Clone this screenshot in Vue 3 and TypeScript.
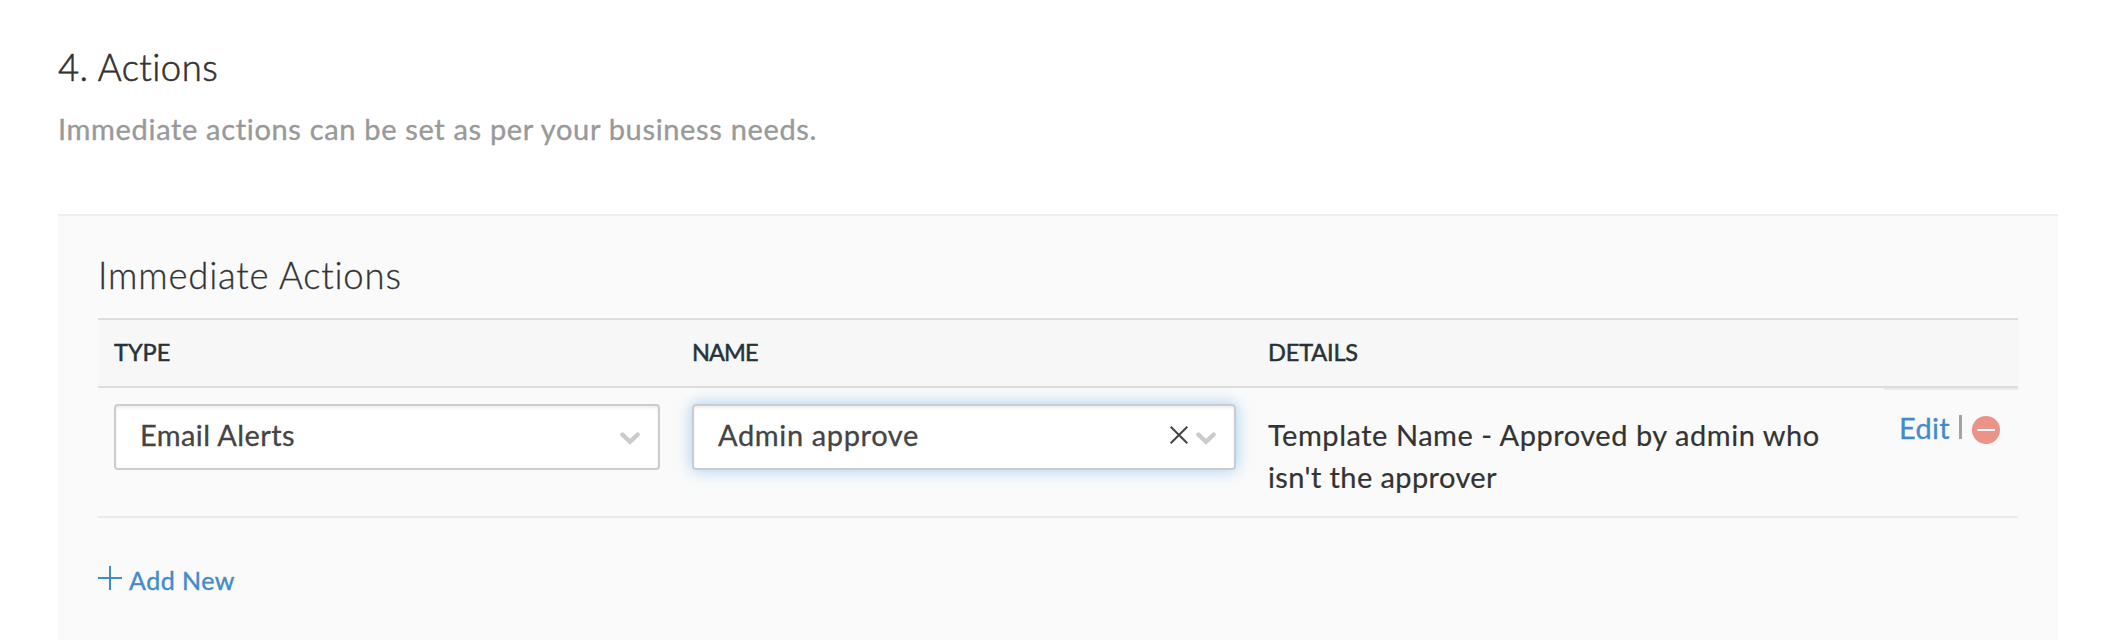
<script setup lang="ts">
interface Column {
  key: string
  label: string
}

const columns: Column[] = [
  { key: 'type', label: 'TYPE' },
  { key: 'name', label: 'NAME' },
  { key: 'details', label: 'DETAILS' },
]

const action = {
  type: 'Email Alerts',
  name: 'Admin approve',
  details: ['Template Name - Approved by admin who', "isn't the approver"],
}
</script>

<template>
  <main class="page">
    <h1 class="title">4. Actions</h1>
    <p class="subtitle">Immediate actions can be set as per your business needs.</p>

    <section class="panel">
      <h2 class="panel-title">Immediate Actions</h2>

      <div class="table">
        <div class="grid head">
          <div v-for="c in columns" :key="c.key" class="th" :class="'th-' + c.key">{{ c.label }}</div>
          <div></div>
        </div>
        <div class="grid row">
          <div class="cell">
            <div class="select">
              <span class="value type">{{ action.type }}</span>
              <svg class="chevron" width="20" height="13" viewBox="0 0 20 13">
                <path d="M2.4 2.6 L10 9.8 L17.6 2.6" />
              </svg>
            </div>
          </div>
          <div class="cell">
            <div class="select focused">
              <span class="value name">{{ action.name }}</span>
              <svg class="clear" width="18" height="18" viewBox="0 0 18 18">
                <path d="M0.7 0.7 L17.3 17.3 M17.3 0.7 L0.7 17.3" />
              </svg>
              <svg class="chevron" width="20" height="13" viewBox="0 0 20 13">
                <path d="M2.4 2.6 L10 9.8 L17.6 2.6" />
              </svg>
            </div>
          </div>
          <div class="details">
            <div class="line first">{{ action.details[0] }}</div>
            <div class="line second">{{ action.details[1] }}</div>
          </div>
          <div class="ops">
            <a class="edit">Edit</a>
            <i class="bar"></i>
            <svg class="remove" width="28" height="28" viewBox="0 0 28 28">
              <circle cx="14" cy="14" r="14" />
              <path d="M5.5 14 H23" />
            </svg>
          </div>
        </div>
      </div>

      <a class="add">
        <svg width="24" height="24" viewBox="0 0 24 24"><path d="M12 0 V24 M0 12 H24" /></svg>
        <span>Add New</span>
      </a>
    </section>
  </main>
</template>

<style>
body {
  margin: 0;
  background: #fff;
  overflow: hidden;
}
</style>

<style scoped>
.page {
  box-sizing: border-box;
  width: 2116px;
  height: 640px;
  overflow: hidden;
  padding: 45px 58px 0;
  font-family: Lato, "Open Sans", sans-serif;
  font-variant-ligatures: none;
  color: #333;
  white-space: nowrap;
}
.title,
.panel-title {
  margin: 0;
  font-size: 36.5px;
  line-height: 44px;
  font-weight: 300;
  letter-spacing: 0.45px;
  -webkit-text-stroke: 0.6px #333;
}
.panel-title {
  letter-spacing: 0.8px;
  -webkit-text-stroke-width: 0.3px;
}
.subtitle {
  margin: 21px 0 0;
  font-size: 29px;
  line-height: 38px;
  letter-spacing: 0.67px;
  color: #999;
  -webkit-text-stroke: 0.35px #999;
}
.panel {
  box-sizing: border-box;
  margin-top: 66px;
  height: 440px;
  padding: 37px 40px 0;
  border-top: 2px solid #eee;
  background: #fafafa;
}
.table {
  margin-top: 21px;
}
.grid {
  display: grid;
  grid-template-columns: 578px 576px 632px 134px;
}
.head {
  box-sizing: border-box;
  height: 70px;
  border-top: 2px solid #ddd;
  border-bottom: 2px solid #ddd;
  background: #f7f7f7;
}
.th {
  padding-left: 16px;
  font-size: 23.5px;
  line-height: 64px;
  color: #263238;
  -webkit-text-stroke: 0.5px #263238;
}
.th-name {
  letter-spacing: -0.9px;
}
.th-details {
  letter-spacing: -0.15px;
}
.row {
  box-sizing: border-box;
  height: 130px;
  border-bottom: 2px solid #ebebeb;
}
.cell {
  padding: 16px 16px 0;
}
.select {
  box-sizing: border-box;
  display: flex;
  align-items: center;
  height: 66px;
  padding: 0 18px 0 24px;
  border: 2px solid #ccc;
  border-radius: 4px;
  background: #fff;
  box-shadow: inset 0 2px 3px rgba(0, 0, 0, 0.07);
}
.focused {
  box-shadow: inset 0 2px 3px rgba(0, 0, 0, 0.07), 0 0 16px rgba(102, 175, 233, 0.6);
}
.value {
  flex: 1;
  margin-top: -4px;
  font-size: 29px;
  line-height: 38px;
  letter-spacing: 0.4px;
  color: #444;
  -webkit-text-stroke: 0.3px #444;
}
.value.name {
  letter-spacing: 0.63px;
}
.chevron {
  margin-top: 3px;
}
.chevron path {
  fill: none;
  stroke: #ccc;
  stroke-width: 4.4;
  stroke-linecap: round;
  stroke-linejoin: miter;
}
.clear {
  margin-right: 8px;
  margin-top: -4px;
}
.clear path {
  stroke: #444;
  stroke-width: 2;
}
.details {
  padding: 26px 0 0 16px;
  font-size: 29px;
  line-height: 42px;
  -webkit-text-stroke: 0.2px #333;
}
.first {
  letter-spacing: 0.53px;
}
.second {
  letter-spacing: 0.4px;
}
.ops {
  display: flex;
  align-items: flex-start;
  padding-left: 15px;
  border-top: 2px solid #ebebeb;
}
.edit {
  width: 60px;
  margin-top: 19px;
  font-size: 29px;
  line-height: 38px;
  letter-spacing: 0.3px;
  color: #428bca;
  -webkit-text-stroke: 0.3px #428bca;
}
.bar {
  width: 3px;
  height: 24px;
  margin-top: 25px;
  background: #a3a3a3;
}
.remove {
  margin: 26px 0 0 10px;
}
.remove circle {
  fill: #eb9389;
}
.remove path {
  stroke: #fff;
  stroke-width: 2;
}
.add {
  display: flex;
  align-items: flex-start;
  margin-top: 48px;
  font-size: 25px;
  line-height: 30px;
  letter-spacing: 0.5px;
  color: #428bca;
}
.add path {
  stroke: #428bca;
  stroke-width: 2;
}
.add span {
  margin: -1px 0 0 7px;
  -webkit-text-stroke: 0.4px #428bca;
}
</style>
